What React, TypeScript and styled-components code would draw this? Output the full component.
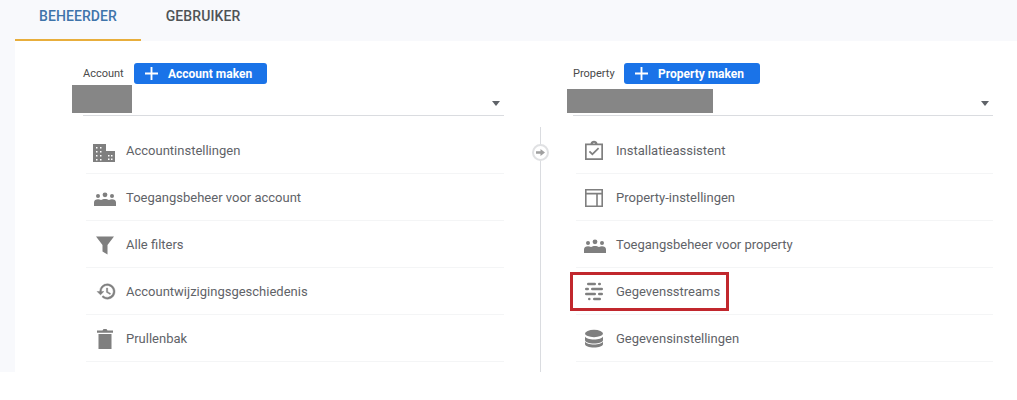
import React from 'react';
import styled, { createGlobalStyle } from 'styled-components';

const GlobalStyle = createGlobalStyle`
  html, body {
    margin: 0;
    padding: 0;
    background: #fff;
    font-family: Roboto, "Liberation Sans", sans-serif;
    overflow: hidden;
  }
`;

const iconColor = '#7f7f7f';

const BuildingIcon = () => (
  <svg width="24" height="24" viewBox="0 0 24 24" fill={iconColor}>
    <path
      fillRule="evenodd"
      d="M1 6h13v7h9v11H1V6zm3 3v1.500h1.500V9H4zm4 0v1.500h1.500V9H8zm-4 4v1.500h1.500V13H4zm4 0v1.500h1.500V13H8zm-4 4v1.500h1.500V17H4zm4 0v1.500h1.500V17H8zm-4 4v1.500h1.500V21H4zm4 0v1.500h1.500V21H8zm8-4v1.500h1.500V17H16zm3 0v1.500h1.500V17H19zm-3 3.500V22h1.500v-1.500H16zm3 0V22h1.500v-1.500H19z"
    />
  </svg>
);

const PeopleIcon = () => (
  <svg width="24" height="24" viewBox="0 0 24 24" fill={iconColor}>
    <circle cx="13" cy="9.800" r="2.400" />
    <circle cx="6" cy="11" r="2" />
    <circle cx="20" cy="11" r="2" />
    <path d="M2 21v-3.500C2 15.500 3.800 14.300 6 14.300c1.100 0 2.200.3 3 .8 1-.7 2.500-1.100 4-1.100s3 .4 4 1.100c.8-.5 1.900-.8 3-.8 2.200 0 4 1.200 4 3.200V21H2z" />
  </svg>
);

const FilterIcon = () => (
  <svg width="24" height="24" viewBox="0 0 24 24" fill={iconColor}>
    <path d="M4 4.500h18L15.500 13v9.500l-5-3V13L4 4.500z" />
  </svg>
);

const HistoryIcon = () => (
  <svg width="24" height="24" viewBox="0 0 24 24" fill={iconColor} stroke={iconColor} strokeWidth="0.5">
    <g transform="translate(14 12.500) scale(.85) translate(-11.500 -12)">
      <path d="M13 3a9 9 0 0 0-9 9H1l3.900 3.900.1.100 4-4H6a7 7 0 1 1 2.100 4.900l-1.400 1.400A9 9 0 1 0 13 3zm-1 5v5l4.300 2.500.7-1.200-3.500-2.100V8H12z" />
    </g>
  </svg>
);

const TrashIcon = () => (
  <svg width="24" height="24" viewBox="0 0 24 24" fill={iconColor}>
    <path d="M6.500 8h13v15h-13V8zM5 4.500h5.500L11.500 3h3l1 1.500H21v2.300H5V4.500z" />
  </svg>
);

const ClipboardIcon = () => (
  <svg width="24" height="24" viewBox="0 0 24 24" fill={iconColor}>
    <path
      fillRule="evenodd"
      d="M3 5.500h5.500a3.600 3.600 0 0 1 7 0H21V22H3V5.500zm1.700 1.700v13.100h14.600V7.200H4.700zM10.800 5.500h2.400a1.300 1.300 0 0 0-2.400 0z"
    />
    <path d="M10.400 17.500l-3.600-3.600 1.200-1.200 2.400 2.400 5.600-5.600 1.200 1.200-6.800 6.800z" />
  </svg>
);

const LayoutIcon = () => (
  <svg width="24" height="24" viewBox="0 0 24 24" fill={iconColor}>
    <path
      fillRule="evenodd"
      d="M3 4h18v18H3V4zm1.600 1.600v2.200h14.800V5.600H4.600zm0 3.800v11h9.600v-11H4.600zm11.200 0v11h3.600v-11h-3.600z"
    />
  </svg>
);

const StreamsIcon = () => (
  <svg width="24" height="24" viewBox="0 0 24 24" fill={iconColor}>
    <rect x="5" y="3.700" width="9" height="2.600" rx="1.300" />
    <rect x="16" y="3.700" width="3" height="2.600" rx="1.300" />
    <rect x="3" y="8.700" width="4" height="2.600" rx="1.300" />
    <rect x="9" y="8.700" width="12" height="2.600" rx="1.300" />
    <rect x="3" y="13.700" width="11" height="2.600" rx="1.300" />
    <rect x="16" y="13.700" width="5" height="2.600" rx="1.300" />
    <rect x="6" y="18.700" width="2.600" height="2.600" rx="1.300" />
    <rect x="11" y="18.700" width="8" height="2.600" rx="1.300" />
  </svg>
);

const DatabaseIcon = () => (
  <svg width="24" height="24" viewBox="0 0 24 24" fill={iconColor}>
    <ellipse cx="12" cy="7.500" rx="9" ry="3.700" />
    <path d="M3 10.500c1 2 4.500 3 9 3s8-1 9-3V14c0 2-4 3.500-9 3.500S3 16 3 14v-3.500z" />
    <path d="M3 15.500c1 2 4.500 3 9 3s8-1 9-3V18c0 2-4 3.500-9 3.500S3 20 3 18v-2.500z" />
  </svg>
);

const accountItems = [
  { label: 'Accountinstellingen', icon: <BuildingIcon /> },
  { label: 'Toegangsbeheer voor account', icon: <PeopleIcon /> },
  { label: 'Alle filters', icon: <FilterIcon /> },
  { label: 'Accountwijzigingsgeschiedenis', icon: <HistoryIcon /> },
  { label: 'Prullenbak', icon: <TrashIcon /> },
];

const propertyItems = [
  { label: 'Installatieassistent', icon: <ClipboardIcon /> },
  { label: 'Property-instellingen', icon: <LayoutIcon /> },
  { label: 'Toegangsbeheer voor property', icon: <PeopleIcon /> },
  { label: 'Gegevensstreams', icon: <StreamsIcon />, marked: true },
  { label: 'Gegevensinstellingen', icon: <DatabaseIcon /> },
];

const App = () => (
  <Page>
    <GlobalStyle />
    <TabBar>
      <Tab $active>BEHEERDER</Tab>
      <Tab>GEBRUIKER</Tab>
    </TabBar>
    <Body>
      <Panel>
        <Column $width={432} $left={57}>
          <Heading>
            <HeadingLabel>Account</HeadingLabel>
            <CreateButton $width={133}>
              <PlusIcon viewBox="0 0 14 14">
                <path d="M6 0h2v6h6v2H8v6H6V8H0V6h6z" />
              </PlusIcon>
              Account maken
            </CreateButton>
          </Heading>
          <Picker>
            <Redacted $width={60} $left={-11} $top={1} />
            <Caret />
          </Picker>
          <List>
            {accountItems.map((item) => (
              <Row key={item.label}>
                <IconSlot>{item.icon}</IconSlot>
                {item.label}
              </Row>
            ))}
          </List>
        </Column>
        <Divider>
          <ArrowBadge>
            <svg width="9" height="9" viewBox="0 0 10 10" fill="#a0a0a0">
              <path d="M0 3.500h5V1l5 4-5 4V6.500H0z" />
            </svg>
          </ArrowBadge>
        </Divider>
        <Column $width={431} $left={21}>
          <Heading>
            <HeadingLabel>Property</HeadingLabel>
            <CreateButton $width={136}>
              <PlusIcon viewBox="0 0 14 14">
                <path d="M6 0h2v6h6v2H8v6H6V8H0V6h6z" />
              </PlusIcon>
              Property maken
            </CreateButton>
          </Heading>
          <Picker>
            <Redacted $width={146} $left={-6} $top={5} />
            <Caret />
          </Picker>
          <List>
            {propertyItems.map((item) => (
              <Row key={item.label} $marked={item.marked}>
                <IconSlot>{item.icon}</IconSlot>
                {item.label}
              </Row>
            ))}
          </List>
        </Column>
      </Panel>
    </Body>
  </Page>
);

const Page = styled.div`
  width: 1017px;
  height: 400px;
  background: #fff;
  overflow: hidden;
`;

const TabBar = styled.div`
  display: flex;
  height: 41px;
  padding-left: 15px;
  background: #f8f9fc;
`;

const Tab = styled.div<{ $active?: boolean }>`
  box-sizing: border-box;
  width: ${({ $active }) => ($active ? '126px' : '124px')};
  height: 41px;
  padding-top: 7px;
  text-align: center;
  font-size: 14px;
  font-weight: 500;
  line-height: 18px;
  letter-spacing: 0.1px;
  color: ${({ $active }) => ($active ? '#3f74aa' : '#4f5356')};
  border-bottom: 2px solid ${({ $active }) => ($active ? '#e8ae3c' : 'transparent')};
`;

const Body = styled.div`
  height: 331px;
  padding-left: 15px;
  background: #f8f9fc;
`;

const Panel = styled.div`
  display: flex;
  height: 100%;
  background: #fff;
`;

const Column = styled.div<{ $width: number; $left: number }>`
  width: ${({ $width }) => $width}px;
  margin-left: ${({ $left }) => $left}px;
`;

const Heading = styled.div`
  display: flex;
  align-items: center;
  height: 21px;
  margin-top: 22px;
`;

const HeadingLabel = styled.span`
  width: 41px;
  margin: 0 10px 0 11px;
  font-size: 11px;
  white-space: nowrap;
  color: #4a4a4a;
`;

const CreateButton = styled.div<{ $width: number }>`
  display: flex;
  align-items: center;
  box-sizing: border-box;
  width: ${({ $width }) => $width}px;
  height: 21px;
  padding-left: 11px;
  border-radius: 3px;
  background: #1a73e8;
  color: #fff;
  font-size: 12px;
  font-weight: 700;
`;

const PlusIcon = styled.svg`
  width: 13px;
  height: 13px;
  margin-right: 10px;
  fill: #fff;
`;

const Picker = styled.div`
  position: relative;
  height: 31px;
  border-bottom: 1px solid #dadce0;
  margin-left: 11px;
`;

const Redacted = styled.div<{ $width: number; $left: number; $top: number }>`
  position: absolute;
  left: ${({ $left }) => $left}px;
  top: ${({ $top }) => $top}px;
  width: ${({ $width }) => $width}px;
  height: ${({ $top }) => 29 - $top}px;
  background: #868686;
`;

const Caret = styled.div`
  position: absolute;
  right: 4px;
  top: 17px;
  border-left: 4px solid transparent;
  border-right: 4px solid transparent;
  border-top: 5px solid #5f6368;
`;

const List = styled.div`
  margin-top: 11px;
  margin-left: 14px;
`;

const Row = styled.div<{ $marked?: boolean }>`
  position: relative;
  display: flex;
  align-items: center;
  box-sizing: border-box;
  height: 47px;
  border-bottom: 1px solid #f4f5f6;
  font-size: 13px;
  color: #5f6368;

  ${({ $marked }) =>
    $marked &&
    `
    &::after {
      content: '';
      position: absolute;
      left: -6px;
      top: 4px;
      box-sizing: border-box;
      width: 159px;
      height: 39px;
      border: 3px solid #c1272d;
    }
  `}
`;

const IconSlot = styled.div`
  display: flex;
  justify-content: center;
  width: 36px;
  margin-right: 4px;
`;

const Divider = styled.div`
  position: relative;
  width: 1px;
  height: 245px;
  margin: 86px 0 0 36px;
  background: #dadce0;
`;

const ArrowBadge = styled.div`
  position: absolute;
  left: -8px;
  top: 17px;
  display: flex;
  align-items: center;
  justify-content: center;
  box-sizing: border-box;
  width: 17px;
  height: 17px;
  border-radius: 50%;
  border: 2px solid #e0e1e3;
  background: #fff;
`;

export default App;
